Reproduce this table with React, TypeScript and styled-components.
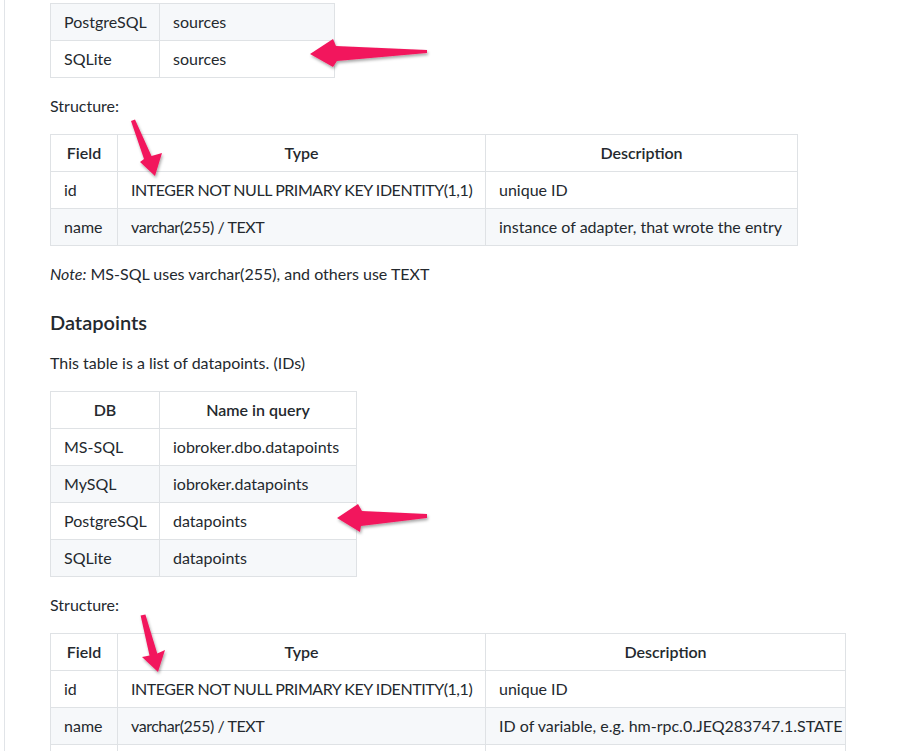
import React from 'react';
import styled, { createGlobalStyle } from 'styled-components';

const GlobalStyle = createGlobalStyle`
  html, body {
    margin: 0;
    padding: 0;
    background: #fff;
    overflow: hidden;
  }
  body {
    font-family: "Segoe UI", Lato, "Liberation Sans", sans-serif;
    font-size: 16px;
    line-height: 1.5;
    color: #24292e;
  }
`;

interface TableData {
  widths: number[];
  head?: string[];
  rows: string[][];
  tightCol?: number;
}

// only the tail of the sources table is still in view
const sourcesTable: TableData = {
  widths: [109, 175],
  rows: [
    ['PostgreSQL', 'sources'],
    ['SQLite', 'sources'],
  ],
};

const sourcesStructure: TableData = {
  widths: [67, 368, 312],
  head: ['Field', 'Type', 'Description'],
  rows: [
    ['id', 'INTEGER NOT NULL PRIMARY KEY IDENTITY(1,1)', 'unique ID'],
    ['name', 'varchar(255) / TEXT', 'instance of adapter, that wrote the entry'],
  ],
  tightCol: 1,
};

const datapointsTable: TableData = {
  widths: [109, 197],
  head: ['DB', 'Name in query'],
  rows: [
    ['MS-SQL', 'iobroker.dbo.datapoints'],
    ['MySQL', 'iobroker.datapoints'],
    ['PostgreSQL', 'datapoints'],
    ['SQLite', 'datapoints'],
  ],
};

// last row runs off the bottom of the view, only its top edge shows
const datapointsStructure: TableData = {
  widths: [67, 368, 360],
  head: ['Field', 'Type', 'Description'],
  rows: [
    ['id', 'INTEGER NOT NULL PRIMARY KEY IDENTITY(1,1)', 'unique ID'],
    ['name', 'varchar(255) / TEXT', 'ID of variable, e.g. hm-rpc.0.JEQ283747.1.STATE'],
    ['\u00a0', '\u00a0', '\u00a0'],
  ],
  tightCol: 1,
};

// pink annotation arrows drawn on top of the screenshot
const arrows = [
  '310,54 333,39 336,46 427,50 427,53 337,61 333,67',
  '131,121 144,159 140,162 155,176 162,153 151.5,156 135,119.5',
  '337,518 358,504 362,511 427,514 427,518 361,526 360,532',
  '140.6,615.6 149.5,655.6 142,657 158,672 165,650 157.3,653.6 145.4,614.4',
];

const MarkdownTable: React.FC<{ data: TableData }> = ({ data }) => {
  const total = data.widths.reduce((a, b) => a + b, 0) + 1;
  return (
    <Table $width={total}>
      <colgroup>
        {data.widths.map((w, i) => (
          <col key={i} style={{ width: w }} />
        ))}
      </colgroup>
      {data.head && (
        <thead>
          <tr>
            {data.head.map((h) => (
              <HeadCell key={h}>{h}</HeadCell>
            ))}
          </tr>
        </thead>
      )}
      <tbody>
        {data.rows.map((row, i) => (
          <Row key={i} $alt={data.head ? i % 2 === 1 : i % 2 === 0}>
            {row.map((c, j) => (
              <Cell key={j} $tight={data.tightCol === j}>
                {c}
              </Cell>
            ))}
          </Row>
        ))}
      </tbody>
    </Table>
  );
};

const App: React.FC = () => {
  return (
    <Page>
      <GlobalStyle />
      <Article>
        <MarkdownTable data={sourcesTable} />
        <Paragraph>Structure:</Paragraph>
        <MarkdownTable data={sourcesStructure} />
        <Paragraph>
          <em>Note:</em> MS-SQL uses varchar(255), and others use TEXT
        </Paragraph>
        <Heading>Datapoints</Heading>
        <Paragraph>This table is a list of datapoints. (IDs)</Paragraph>
        <MarkdownTable data={datapointsTable} />
        <Paragraph>Structure:</Paragraph>
        <MarkdownTable data={datapointsStructure} />
      </Article>
      <Overlay width="907" height="751" viewBox="0 0 907 751">
        <defs>
          <filter id="arrowShadow" x="-20%" y="-20%" width="140%" height="140%">
            <feDropShadow dx="1" dy="2" stdDeviation="1.5" floodColor="#000" floodOpacity="0.35" />
          </filter>
        </defs>
        {arrows.map((pts, i) => (
          <polygon key={i} points={pts} fill="#f2185d" filter="url(#arrowShadow)" />
        ))}
      </Overlay>
    </Page>
  );
};

export default App;

const Page = styled.div`
  position: relative;
  width: 907px;
  height: 751px;
  overflow: hidden;
`;

const Article = styled.article`
  margin-left: 4px;
  border-left: 1px solid #e1e4e8;
  padding: 3px 0 40px 45px;
`;

const Table = styled.table<{ $width: number }>`
  border-collapse: collapse;
  border-spacing: 0;
  table-layout: fixed;
  width: ${(p) => p.$width}px;
  margin: 0 0 16px;
`;

const Row = styled.tr<{ $alt: boolean }>`
  background: ${(p) => (p.$alt ? '#f6f8fa' : '#fff')};
`;

const HeadCell = styled.th`
  padding: 6px 13px;
  border: 1px solid #dfe2e5;
  font-weight: 600;
  text-align: center;
  white-space: nowrap;
`;

const Cell = styled.td<{ $tight: boolean }>`
  padding: 6px 13px;
  border: 1px solid #dfe2e5;
  text-align: left;
  white-space: nowrap;
  letter-spacing: ${(p) => (p.$tight ? '-0.45px' : 'normal')};
`;

const Paragraph = styled.p`
  margin: 0 0 16px;
`;

const Heading = styled.h3`
  margin: 24px 0 16px;
  font-size: 20px;
  font-weight: 600;
  line-height: 1.25;
`;

const Overlay = styled.svg`
  position: absolute;
  left: 0;
  top: 0;
  pointer-events: none;
`;
